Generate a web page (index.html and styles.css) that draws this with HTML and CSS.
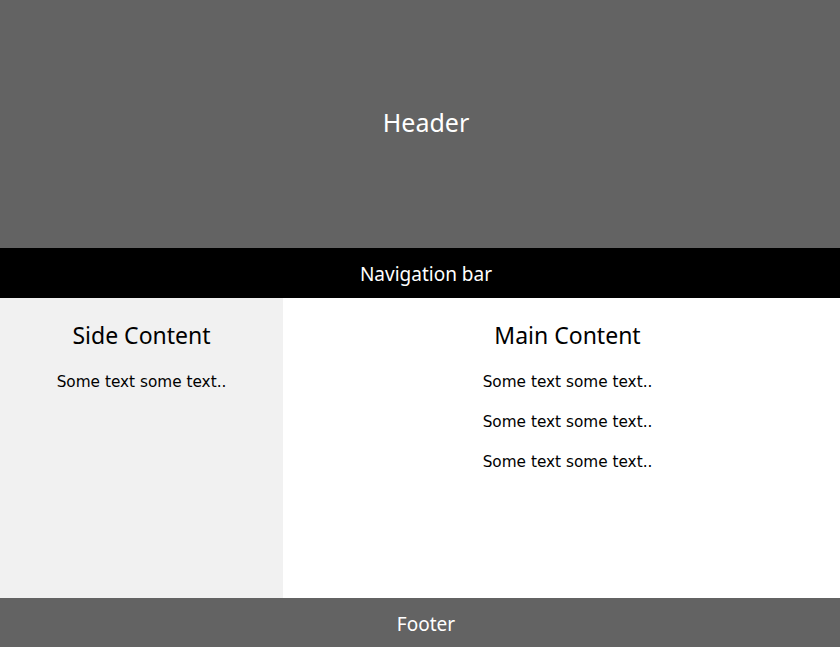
FILE: index.html
```html
<!DOCTYPE html>
<html>
<head>
<meta charset="utf-8">
<link rel="stylesheet" href="styles.css">
</head>
<body>
<div class="page">
  <div class="header"><h1>Header</h1></div>
  <div class="navbar">Navigation bar</div>
  <div class="row">
    <div class="side">
      <h2>Side Content</h2>
      <p>Some text some text..</p>
    </div>
    <div class="main">
      <h2>Main Content</h2>
      <p>Some text some text..</p>
      <p>Some text some text..</p>
      <p>Some text some text..</p>
    </div>
  </div>
  <div class="footer">Footer</div>
</div>
</body>
</html>
```
FILE: styles.css
```css
* { box-sizing: border-box; }
html, body {
  margin: 0;
  overflow: hidden;
}
body {
  font-family: "Noto Sans", sans-serif;
}
.page {
  width: 852px;
}
.header {
  background: #636363;
  color: #fff;
  height: 248px;
  display: flex;
  align-items: center;
  justify-content: center;
  padding-bottom: 5px;
}
.header h1 {
  margin: 0;
  font-size: 25px;
  font-weight: normal;
}
.navbar {
  background: #000;
  color: #fff;
  height: 50px;
  display: flex;
  align-items: center;
  justify-content: center;
  font-size: 19px;
  padding-top: 2px;
}
.row {
  display: flex;
  height: 300px;
}
.side {
  width: 283px;
  background: #f1f1f1;
  text-align: center;
  padding-top: 21px;
}
.main {
  flex: 1;
  background: #fff;
  text-align: center;
  padding-top: 21px;
}
h2 {
  margin: 0 0 21px;
  font-size: 23px;
  font-weight: normal;
}
p {
  margin: 0 0 20px;
  font-family: "DejaVu Sans", sans-serif;
  font-size: 15.3px;
  line-height: 20px;
}
.footer {
  background: #636363;
  color: #fff;
  height: 49px;
  display: flex;
  align-items: center;
  justify-content: center;
  font-size: 19px;
  padding-top: 2px;
}
```
